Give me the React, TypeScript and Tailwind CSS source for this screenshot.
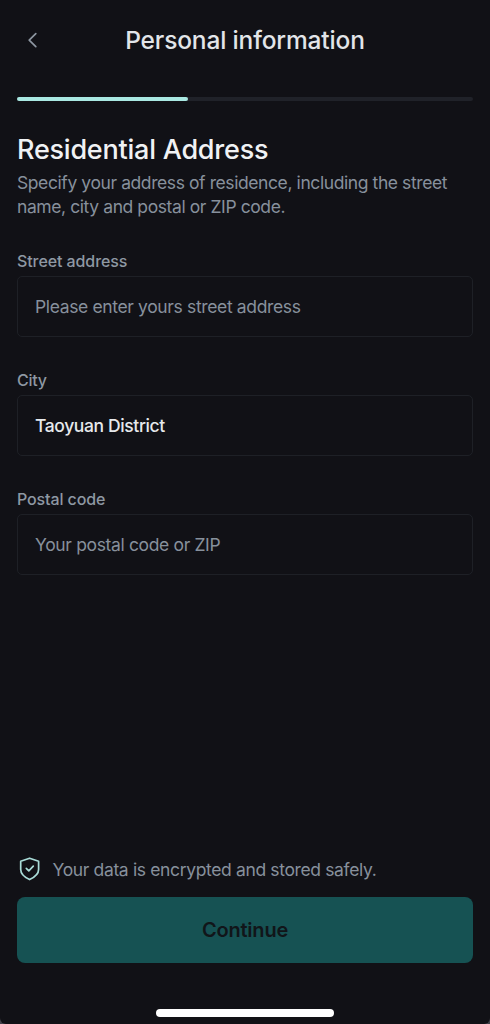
type FieldProps = {
  id: string;
  label: string;
  labelClass: string;
  inputClass: string;
  placeholder?: string;
  value?: string;
};

function Field({ id, label, labelClass, inputClass, placeholder, value }: FieldProps) {
  return (
    <div className="flex flex-col">
      <label htmlFor={id} className={`h-6 pt-px text-base leading-6 font-medium whitespace-nowrap text-[#8e98a3] ${labelClass}`}>
        {label}
      </label>
      <input
        id={id}
        placeholder={placeholder}
        defaultValue={value}
        className={`mt-1 h-[61px] w-full rounded-[5px] border border-[#1e2026] bg-transparent px-[17px] text-[17.5px] text-[#e6e9ec] outline-none placeholder:text-[#87909c] ${inputClass}`}
      />
    </div>
  );
}

export default function App() {
  return (
    <div className="h-[1024px] w-[490px] overflow-hidden bg-[#41414a] font-['Inter','Liberation_Sans',sans-serif]">
      <main className="flex h-full flex-col rounded-b-[6px] bg-[#111116] px-[17px]">
        <header className="grid h-20 grid-cols-[32px_1fr_32px] items-center">
          <button aria-label="Back" className="flex h-8 w-8 items-center justify-center text-[#8d96a1]">
            <svg width="16" height="18" viewBox="0 0 16 18" fill="none" stroke="currentColor" strokeWidth="1.7" strokeLinecap="round" strokeLinejoin="round">
              <path d="M10.8 2.7 4.2 9.2l6.6 6.4" />
            </svg>
          </button>
          <h1 className="text-center text-[24.5px] leading-8 font-medium tracking-[-0.15px] whitespace-nowrap text-[#e2e5e9]">Personal information</h1>
        </header>

        <div className="mt-[17px] h-1 rounded-full bg-[#202229]">
          <div className="h-full w-[171px] rounded-full bg-[#a9e8e2]" />
        </div>

        <section className="mt-[33px]">
          <h2 className="h-8 text-[27px] leading-8 font-medium tracking-[-0.23px] whitespace-nowrap text-[#f0f2f4]">Residential Address</h2>
          <p className="mt-[5px] text-[17.5px] leading-6 tracking-[-0.41px] whitespace-nowrap text-[#87909c]">
            Specify your address of residence, including the street
            <br />
            <span>name, city and postal or ZIP code.</span>
          </p>
        </section>

        <form className="mt-[29px] flex flex-col gap-[30px]">
          <Field id="street" label="Street address" labelClass="tracking-[-0.09px]" placeholder="Please enter yours street address" inputClass="tracking-[-0.36px]" />
          <Field id="city" label="City" labelClass="tracking-[-0.3px]" value="Taoyuan District" inputClass="font-medium tracking-[-0.38px]" />
          <Field id="postal" label="Postal code" labelClass="tracking-[-0.12px]" placeholder="Your postal code or ZIP" inputClass="tracking-[-0.35px]" />
        </form>

        <footer className="mt-auto flex flex-col">
          <div className="flex h-6 items-center">
            <svg className="ml-px shrink-0" width="24" height="24" viewBox="0 0 24 24" fill="none" stroke="#a9dcd8" strokeWidth="1.7" strokeLinecap="round" strokeLinejoin="round">
              <path d="M11.6 1.2 2.7 4.3v8.2c0 4.6 3.6 7.6 8.9 10.1 5.3-2.5 9-5.5 9-10.1V4.3Z" />
              <path d="m8.3 11.3 2.5 2.5 4.5-4.6" />
            </svg>
            <p className="ml-[10.5px] pt-0.5 text-[17.5px] leading-6 tracking-[-0.36px] whitespace-nowrap text-[#87909c]">Your data is encrypted and stored safely.</p>
          </div>
          <button className="mt-4 h-[66px] rounded-lg bg-[#165253] text-[20px] font-semibold tracking-[-0.2px] text-[#111519]">Continue</button>
          <div className="mt-[46px] mb-[7px] h-2 w-[178px] self-center rounded-full bg-white" />
        </footer>
      </main>
    </div>
  );
}
